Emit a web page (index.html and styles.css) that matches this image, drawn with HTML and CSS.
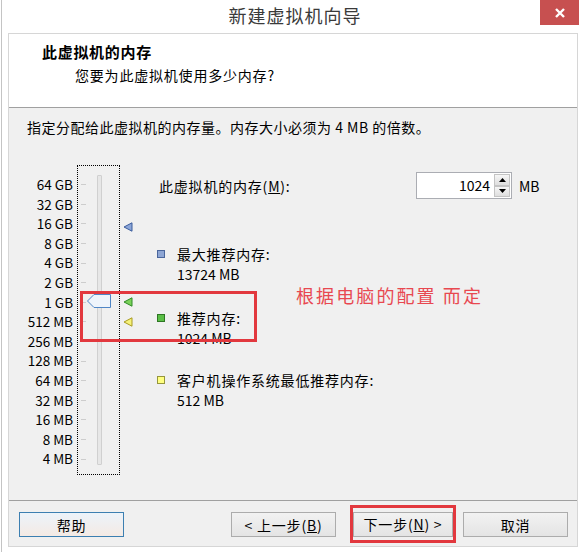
FILE: index.html
```html
<!DOCTYPE html>
<html>

  <head>

    <meta name="viewport" content="width=device-width, initial-scale=1.0">

    <title>新建虚拟机向导</title>

    <link rel="stylesheet" href="styles.css">

  </head>
  <body>

    <div class="window">

      <div class="titlebar">
        <div class="title">新建虚拟机向导</div>
        <div class="close">
          <svg width="12" height="12" viewBox="0 0 12 12"><path d="M2 2 L10 10 M10 2 L2 10" stroke="#fff" stroke-width="2.4" fill="none"/></svg>
        </div>
      </div>

      <div class="dialog">

        <div class="head">
          <div class="head-title">此虚拟机的内存</div>
          <div class="head-sub">您要为此虚拟机使用多少内存?</div>
        </div>

        <div class="body">
          <div class="intro">指定分配给此虚拟机的内存量。内存大小必须为 4 MB 的倍数。</div>

          <div class="main">

            <div class="labels">
              <div>64 GB</div>
              <div>32 GB</div>
              <div>16 GB</div>
              <div>8 GB</div>
              <div>4 GB</div>
              <div>2 GB</div>
              <div>1 GB</div>
              <div>512 MB</div>
              <div>256 MB</div>
              <div>128 MB</div>
              <div>64 MB</div>
              <div>32 MB</div>
              <div>16 MB</div>
              <div>8 MB</div>
              <div>4 MB</div>
            </div>

            <div class="slider">
              <div class="ticks">
                <span></span><span></span><span></span><span></span><span></span>
                <span></span><span></span><span></span><span></span><span></span>
                <span></span><span></span><span></span><span></span><span></span>
              </div>
              <div class="track"></div>
              <svg class="thumb" width="25" height="16" viewBox="0 0 25 16"><path d="M0.5 8 L7 1.5 L23.5 1.5 L23.5 14.5 L7 14.5 Z" fill="#eef4fb" stroke="#4f86c6" stroke-width="1"/></svg>
            </div>

            <div class="markers">
              <div></div>
              <div></div>
              <div class="marker-max"><svg width="10" height="10" viewBox="0 0 10 10"><path d="M1 5 L9 0.8 L9 9.2 Z" fill="#8ca6d8" stroke="#3b5c9c" stroke-width="1"/></svg></div>
              <div></div>
              <div></div>
              <div></div>
              <div><svg width="10" height="10" viewBox="0 0 10 10"><path d="M1 5 L9 0.8 L9 9.2 Z" fill="#7bd25a" stroke="#2f8a26" stroke-width="1"/></svg></div>
              <div><svg width="10" height="10" viewBox="0 0 10 10"><path d="M1 5 L9 0.8 L9 9.2 Z" fill="#f6f27a" stroke="#a89a22" stroke-width="1"/></svg></div>
              <div></div>
              <div></div>
              <div></div>
              <div></div>
              <div></div>
              <div></div>
              <div></div>
            </div>

            <div class="info">
              <div class="mem-row">
                <div class="mem-label">此虚拟机的内存(<u>M</u>):</div>
                <div class="spin">
                  <div class="spin-value">1024</div>
                  <div class="spin-buttons">
                    <div class="spin-btn"><svg width="7" height="4" viewBox="0 0 7 4"><path d="M0 4 L3.5 0 L7 4 Z" fill="#000"/></svg></div>
                    <div class="spin-btn"><svg width="7" height="4" viewBox="0 0 7 4"><path d="M0 0 L3.5 4 L7 0 Z" fill="#000"/></svg></div>
                  </div>
                </div>
                <div class="mem-unit">MB</div>
              </div>

              <div class="legend legend-max">
                <span class="swatch swatch-blue"></span>
                <div>
                  <div>最大推荐内存:</div>
                  <div class="value">13724 MB</div>
                </div>
              </div>

              <div class="legend legend-rec">
                <span class="swatch swatch-green"></span>
                <div>
                  <div>推荐内存:</div>
                  <div class="value">1024 MB</div>
                </div>
              </div>

              <div class="legend legend-min">
                <span class="swatch swatch-yellow"></span>
                <div>
                  <div>客户机操作系统最低推荐内存:</div>
                  <div class="value">512 MB</div>
                </div>
              </div>
            </div>

            <div class="note-box"></div>
            <div class="note">根据电脑的配置 而定</div>

          </div>
        </div>

        <div class="footer">
          <button class="btn btn-help">帮助</button>
          <button class="btn btn-back">&lt; 上一步(<u>B</u>)</button>
          <div class="next-wrap">
            <button class="btn btn-next">下一步(<u>N</u>) &gt;</button>
          </div>
          <button class="btn btn-cancel">取消</button>
        </div>

      </div>

    </div>

  </body>
</html>
```

FILE: styles.css
```css
* {
  font-family: "Noto Sans CJK SC", "Noto Sans", sans-serif;
  box-sizing: border-box;
}

body {
  margin: 0px;
  padding: 0px;
  background-color: rgb(255, 255, 255);
}

.window {
  width: 580px;
  height: 552px;
  margin-left: 1px;
  padding-left: 6px;
  border-left: 1px solid rgb(196, 196, 196);
  background-color: rgb(255, 255, 255);
}

.titlebar {
  display: flex;
  height: 33px;
}

.title {
  flex: 1;
  padding-left: 42px;
  text-align: center;
  font-size: 18px;
  letter-spacing: 1px;
  line-height: 30px;
  color: rgb(58, 58, 58);
}

.close {
  display: flex;
  width: 39px;
  height: 25px;
  margin-right: 2px;
  justify-content: center;
  align-items: center;
  background-color: rgb(199, 80, 80);
}

.dialog {
  width: 570px;
  border: 1px solid rgb(214, 214, 214);
}

.head {
  height: 74px;
  padding: 8px 0px 0px 33px;
  background-color: rgb(255, 255, 255);
  border-bottom: 1px solid rgb(160, 160, 160);
}

.head-title {
  font-size: 15px;
  font-weight: bold;
  letter-spacing: 0.7px;
  line-height: 20px;
}

.head-sub {
  margin-top: 3px;
  margin-left: 33px;
  font-size: 14px;
  letter-spacing: 0.8px;
  line-height: 20px;
}

.body {
  height: 392px;
  padding-top: 10px;
  background-color: rgb(240, 240, 240);
  font-size: 14px;
  letter-spacing: 0.8px;
}

.intro {
  margin-left: 18px;
  line-height: 18px;
  letter-spacing: 0.5px;
}

.main {
  position: relative;
  display: flex;
  margin-top: 29px;
}

.labels {
  width: 64px;
  padding-top: 10px;
  font-size: 13.5px;
  letter-spacing: 0px;
  text-align: right;
}

.labels div {
  height: 19.6px;
  line-height: 19.6px;
}

.slider {
  position: relative;
  display: flex;
  width: 43px;
  height: 310px;
  margin-left: 4px;
  padding-left: 3px;
  border: 1px dotted rgb(0, 0, 0);
}

.ticks {
  display: flex;
  flex-direction: column;
  width: 5px;
  padding-top: 9px;
}

.ticks span {
  display: flex;
  height: 19.6px;
  align-items: center;
}

.ticks span::before {
  content: "";
  width: 5px;
  height: 1px;
  background-color: rgb(205, 205, 205);
}

.track {
  width: 5px;
  height: 290px;
  margin-top: 9px;
  margin-left: 11px;
  border: 1px solid rgb(208, 208, 208);
  border-radius: 1px;
  background-color: rgb(231, 231, 231);
}

.thumb {
  position: absolute;
  left: 9px;
  top: 127px;
}

.markers {
  width: 10px;
  margin-left: 3px;
  padding-top: 10px;
}

.markers div {
  display: flex;
  height: 19.6px;
  align-items: center;
}

.marker-max {
  padding-top: 6px;
}

.info {
  margin-left: 24px;
}

.mem-row {
  display: flex;
  height: 27px;
  margin-top: 7px;
  align-items: center;
}

.mem-label {
  width: 259px;
  padding-left: 2px;
}

.spin {
  display: flex;
  width: 96px;
  height: 27px;
  border: 1px solid rgb(171, 173, 179);
  background-color: rgb(255, 255, 255);
}

.spin-value {
  flex: 1;
  padding-right: 3px;
  text-align: right;
  line-height: 25px;
  letter-spacing: 0px;
}

.spin-buttons {
  display: flex;
  flex-direction: column;
  width: 18px;
  padding: 1px;
}

.spin-btn {
  display: flex;
  flex: 1;
  justify-content: center;
  align-items: center;
  border: 1px solid rgb(196, 196, 196);
  background: linear-gradient(rgb(246, 246, 246), rgb(222, 222, 222));
}

.mem-unit {
  margin-left: 7px;
  letter-spacing: 0px;
}

.legend {
  display: flex;
  line-height: 20px;
}

.legend-max {
  margin-top: 45px;
}

.legend-rec {
  margin-top: 24px;
}

.legend-min {
  margin-top: 22px;
}

.swatch {
  width: 8px;
  height: 8px;
  margin-top: 6px;
  margin-right: 12px;
  border: 1px solid;
}

.swatch-blue {
  background-color: rgb(142, 166, 212);
  border-color: rgb(74, 102, 156);
}

.swatch-green {
  background-color: rgb(90, 190, 70);
  border-color: rgb(46, 118, 36);
}

.swatch-yellow {
  background-color: rgb(255, 255, 128);
  border-color: rgb(150, 150, 60);
}

.value {
  letter-spacing: 0px;
}

.note-box {
  position: absolute;
  left: 71px;
  top: 126px;
  width: 177px;
  height: 51px;
  border: 3px solid rgb(226, 56, 62);
}

.note {
  position: absolute;
  left: 287px;
  top: 118px;
  font-size: 18px;
  letter-spacing: 2.1px;
  line-height: 24px;
  color: rgb(232, 72, 80);
}

.footer {
  display: flex;
  height: 46px;
  padding: 11px 9px 0px 10px;
  align-items: flex-start;
  background-color: rgb(240, 240, 240);
  border-top: 1px solid rgb(160, 160, 160);
}

.btn {
  width: 105px;
  height: 25px;
  padding: 0px;
  font-size: 14px;
  letter-spacing: 0.8px;
  line-height: 22px;
  color: rgb(0, 0, 0);
  border: 1px solid rgb(172, 172, 172);
  background: linear-gradient(rgb(242, 242, 242), rgb(228, 228, 228));
}

.btn-help {
  border-color: rgb(60, 127, 177);
  background: linear-gradient(rgb(236, 243, 250), rgb(244, 234, 228));
}

.btn-back {
  margin-left: auto;
}

.next-wrap {
  width: 106px;
  margin-top: -7px;
  margin-left: 14px;
  padding: 3px 0px;
  border: 3px solid rgb(226, 56, 62);
}

.btn-next {
  width: 100%;
}

.btn-cancel {
  margin-left: 7px;
}
```
